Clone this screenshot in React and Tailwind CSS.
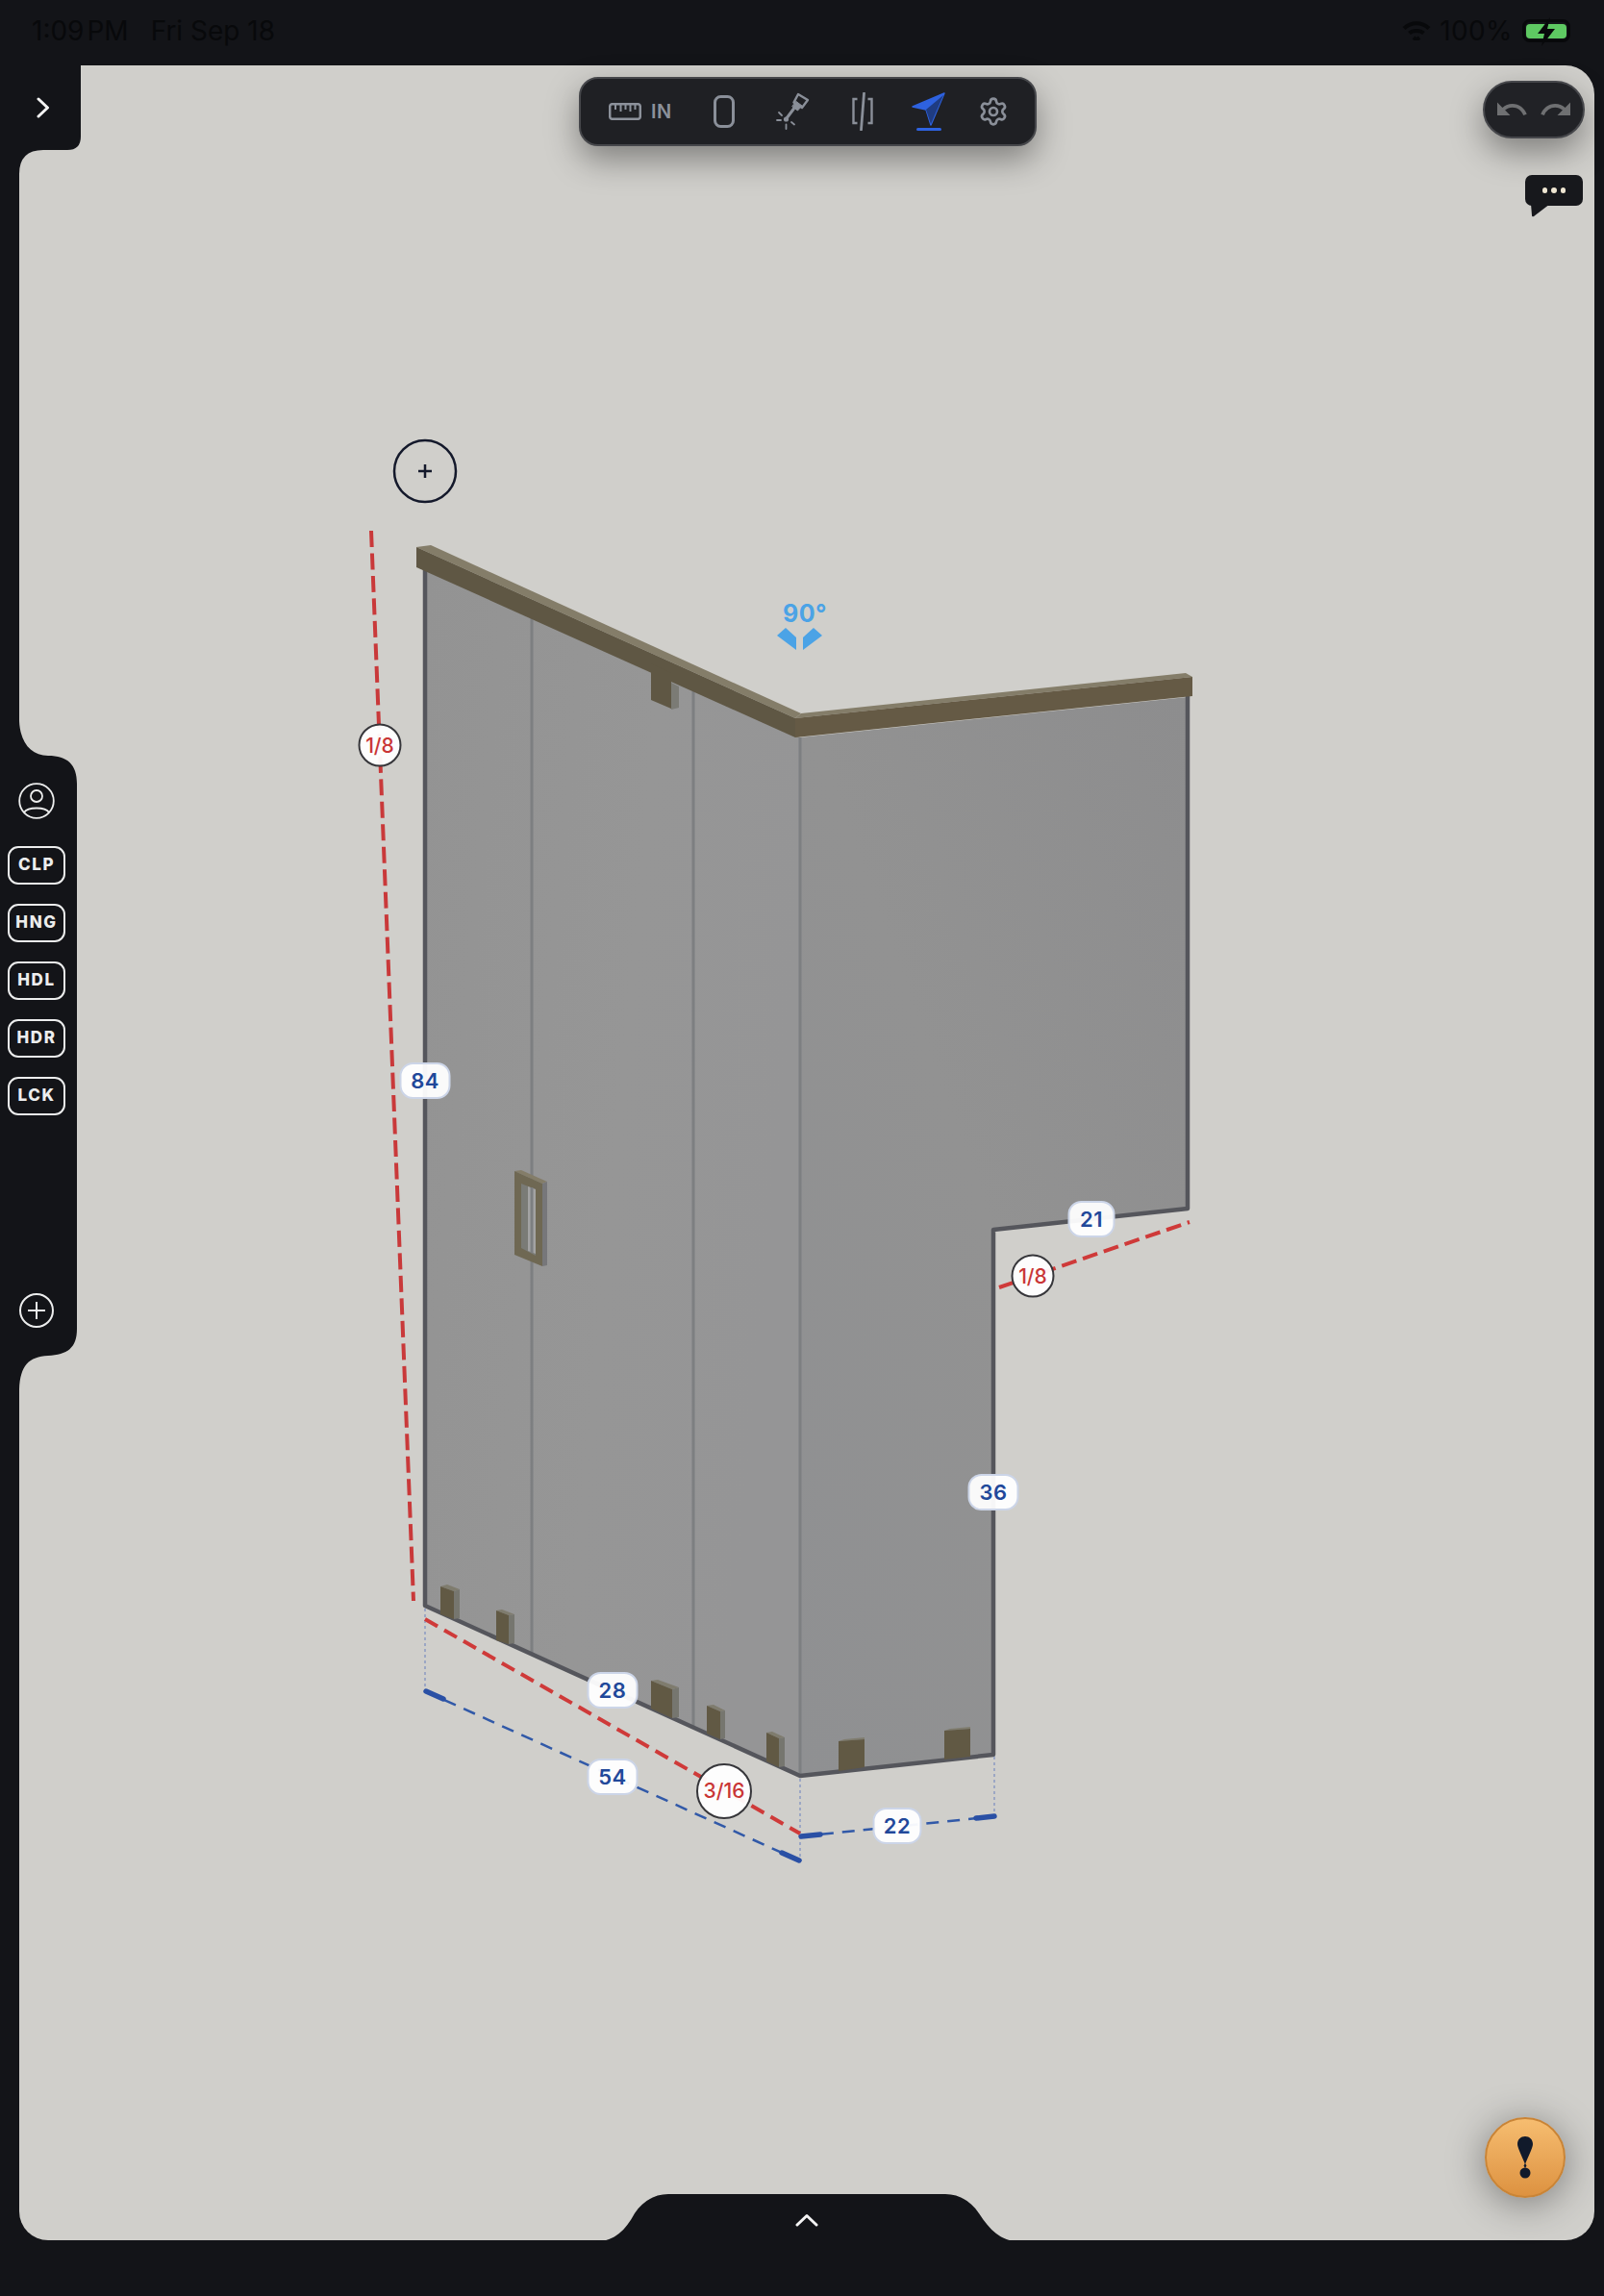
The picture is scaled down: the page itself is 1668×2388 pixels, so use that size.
import React from 'react';
import { Settings } from 'lucide-react';
import { MdUndo, MdRedo } from 'react-icons/md';

const FONT = "font-['Inter','Noto_Sans',sans-serif]";

// feet along the bottom of the two walls, [front, top, side] faces
const feet = [
  ['458,1650 472,1655 472,1684 458,1679', '458,1650 465,1648 478,1653 472,1655', '472,1655 478,1653 478,1683 472,1684'],
  ['516,1675 529,1680 529,1710 516,1706', '516,1675 522,1674 535,1679 529,1680', '529,1680 535,1679 535,1709 529,1710'],
  ['677,1748 699,1757 699,1787 677,1777', '677,1748 684,1747 706,1755 699,1757', '699,1757 706,1755 706,1786 699,1787'],
  ['735,1774 749,1780 749,1809 735,1803', '735,1774 742,1773 754,1779 749,1780', '749,1780 754,1779 754,1808 749,1809'],
  ['797,1802 810,1808 810,1838 797,1832', '797,1802 803,1801 816,1807 810,1808', '810,1808 816,1807 816,1837 810,1838'],
  ['872,1811 899,1809 899,1838 872,1842', '872,1811 878,1809 899,1807 899,1809', '899,1809 899,1809 899,1838 899,1838'],
  ['982,1800 1009,1798 1009,1827 982,1830', '982,1800 988,1798 1009,1796 1009,1798', '1009,1798 1009,1798 1009,1827 1009,1827'],
];

function Chip({ children }) {
  return (
    <div className="flex h-[40px] w-[60px] items-center justify-center rounded-[11px] border-2 border-[#eceded] text-[17px] font-extrabold tracking-[1.6px] text-[#eceded]">
      {children}
    </div>
  );
}

function Dim({ className, children }) {
  return (
    <div className={`absolute flex h-[38px] -translate-x-1/2 -translate-y-1/2 items-center justify-center rounded-[14px] border-2 border-[#ccd5e8] bg-white/95 text-[22px] font-semibold tracking-[0.5px] text-[#21489a] ${className}`}>
      {children}
    </div>
  );
}

function Gap({ className, children }) {
  return (
    <div className={`absolute flex -translate-x-1/2 -translate-y-1/2 items-center justify-center rounded-full border-2 border-[#36363a] bg-white/95 text-[21px] font-medium text-[#c93535] ${className}`}>
      {children}
    </div>
  );
}

function Drawing() {
  return (
    <svg className="absolute left-0 top-0" width="1668" height="2388" viewBox="0 0 1668 2388" fill="none">
      <defs>
        <linearGradient id="wallLeft" x1="0" y1="0" x2="1" y2="0.3">
          <stop offset="0" stopColor="#939393" />
          <stop offset="0.6" stopColor="#969696" />
          <stop offset="1" stopColor="#959596" />
        </linearGradient>
        <linearGradient id="wallRight" x1="0" y1="1" x2="1" y2="0">
          <stop offset="0" stopColor="#8f9092" />
          <stop offset="0.5" stopColor="#929292" />
          <stop offset="1" stopColor="#8d8d8e" />
        </linearGradient>
      </defs>

      {/* glass */}
      <polygon points="442,592 832,767 832,1847 442,1670" fill="url(#wallLeft)" />
      <polygon points="832,767 1235,725 1235,1257 1033,1279 1033,1825 832,1847" fill="url(#wallRight)" />

      {/* seams */}
      <path d="M553 643V1720M721 719V1797M832 767V1847" stroke="#7d7f81" strokeWidth="3" />
      <path d="M442 590V1670L832 1847L1033 1825V1279L1235 1257V722" stroke="#55565c" strokeWidth="4.5" strokeLinejoin="round" />

      {/* top rail */}
      <polygon points="433,569 448,567 833,742 827,747" fill="#847d69" />
      <polygon points="433,569 827,747 827,767 433,590" fill="#5f5744" />
      <polygon points="827,747 833,742 1233,700 1240,704" fill="#847d69" />
      <polygon points="827,747 1240,704 1240,724 827,767" fill="#655a45" />
      <polygon points="677,690 698,700 698,737 677,728" fill="#5f5744" />
      <polygon points="698,710 706,714 706,736 698,738" fill="#7b7b75" />

      {/* handle */}
      <polygon points="535,1218 542,1217 569,1229 564,1231" fill="#847d69" />
      <polygon points="564,1231 569,1229 569,1316 564,1317" fill="#77777a" />
      <polygon points="535,1218 564,1231 564,1317 535,1305" fill="#6f6853" />
      <polygon points="542,1231 557,1237 557,1306 542,1298" fill="#7a7b76" />
      <polygon points="549,1234 557,1237 557,1304 549,1301" fill="#a3a3a3" />
      <path d="M553 1235V1303" stroke="#7d7f81" strokeWidth="3" />

      {/* feet */}
      {feet.map(([front, top, side], i) => (
        <g key={i}>
          <polygon points={top} fill="#7f7c6e" />
          <polygon points={side} fill="#76766f" />
          <polygon points={front} fill="#615944" />
        </g>
      ))}

      {/* angle marker */}
      <polygon points="808,661 817,653 828,663 828,676" fill="#4ba3e6" />
      <polygon points="835,663 846,653 855,661 835,676" fill="#4ba3e6" />

      {/* add point */}
      <circle cx="442" cy="490" r="32" stroke="#14192b" strokeWidth="2.5" />
      <path d="M442 483V497M435 490H449" stroke="#14192b" strokeWidth="2.5" />

      {/* dotted guides */}
      <path d="M442 1673V1758M832 1850V1935M1034 1827V1888" stroke="#8a9bc2" strokeWidth="1.5" strokeDasharray="3 3" />

      {/* blue dimensions */}
      <path d="M442 1759L833 1936" stroke="#3159a8" strokeWidth="2.5" strokeDasharray="13 9" />
      <path d="M832 1910L1036 1889" stroke="#3159a8" strokeWidth="2.5" strokeDasharray="13 9" />
      <path d="M443 1759L461 1767M813 1927L831 1935M833 1910L853 1908M1015 1891L1034 1889" stroke="#2a50a5" strokeWidth="5.5" strokeLinecap="round" />

      {/* red dimensions */}
      <path d="M386 552L430 1665" stroke="#c9393a" strokeWidth="4" strokeDasharray="17 6.5" />
      <path d="M442 1684L832 1907" stroke="#cf3a39" strokeWidth="4" strokeDasharray="15 8" />
      <path d="M1039 1339L1237 1271" stroke="#cf3a39" strokeWidth="4" strokeDasharray="16 7" />
    </svg>
  );
}

function Tabs() {
  return (
    <svg className="absolute left-0 top-0" width="1668" height="2388" viewBox="0 0 1668 2388" fill="#131418">
      <path d="M0 60H84V142Q84 156 70 156H45Q20 156 20 181V200H0Z" />
      <path d="M0 750H20C21 772 32 786 50 786C70 786 80 795 80 815V1382C80 1402 70 1409 50 1410C30 1411 21 1420 20 1445H0Z" />
      <path d="M620 2332C640 2330 650 2320 660 2302C668 2290 680 2282 695 2282H983C998 2282 1010 2290 1018 2302C1030 2320 1040 2330 1060 2332Z" />
    </svg>
  );
}

function Toolbar() {
  return (
    <div className="absolute left-[602px] top-[80px] flex h-[72px] w-[476px] items-center rounded-[20px] border-2 border-[#46474b] bg-[#1f2024] pl-[29px] shadow-[0_14px_34px_rgba(0,0,0,0.38)]">
      <svg width="34" height="18" viewBox="0 0 34 18" fill="none" stroke="#8c919b" strokeWidth="2.5">
        <rect x="1.2" y="1.2" width="31.6" height="15.6" rx="2.5" />
        <path d="M7 1.5V7M12.5 1.5V9M17.5 1.5V7M22.5 1.5V9M27.5 1.5V7" strokeWidth="2" />
      </svg>
      <span className="ml-[10px] text-[20px] font-semibold tracking-[0.5px] text-[#8c919b]">IN</span>

      <svg className="ml-[43px]" width="22" height="34" viewBox="0 0 22 34" fill="none">
        <rect x="1.5" y="1.5" width="19" height="31" rx="6" stroke="#8a8f99" strokeWidth="3" />
      </svg>

      <svg className="ml-[43px]" width="36" height="40" viewBox="0 0 36 40" fill="none" stroke="#8a8f99" strokeLinecap="round">
        <path d="M23 2L33 8L27 16L18.5 10.5Z" strokeWidth="2.4" strokeLinejoin="round" />
        <path d="M21 9.5L27 14L22.5 19L17 15Z" fill="#8a8f99" strokeWidth="1" />
        <path d="M18.5 17L11 27" strokeWidth="3" />
        <circle cx="10.5" cy="28" r="2.6" fill="#8a8f99" stroke="none" />
        <path d="M1 29H5M3 21L6 24M10.5 33.5V38M16 31L19 33.5" strokeWidth="1.8" />
      </svg>

      <svg className="ml-[43px]" width="22" height="40" viewBox="0 0 22 40" fill="none" stroke="#8a8f99" strokeWidth="2.4">
        <path d="M5.5 7H1.5V32H5.5M16.5 7H20.5V32H16.5" />
        <path d="M12.5 1L9.5 39" strokeWidth="2.8" strokeLinecap="round" />
      </svg>

      <div className="ml-[40px] flex flex-col items-center">
        <svg width="36" height="36" viewBox="0 0 36 36">
          <polygon points="1,15 34,1 20,34 15,18" fill="#2e62e0" stroke="#2e62e0" strokeWidth="1.5" strokeLinejoin="round" />
          <polygon points="33,3 20,33 15,18" fill="#1f3c82" />
        </svg>
        <div className="mt-[1px] h-[3px] w-[26px] rounded-full bg-[#2e62e0]" />
      </div>

      <Settings className="ml-[33px]" size={32} color="#8a8f99" strokeWidth={2} />
    </div>
  );
}

export default function App() {
  return (
    <div className={`relative flex h-[2388px] w-[1668px] flex-col overflow-hidden bg-[#131418] ${FONT}`}>
      {/* status bar */}
      <div className="flex h-[68px] items-center justify-between pb-[4px] pl-[33px] pr-[35px] text-[28px] text-[#08090b]">
        <div className="flex items-center">
          <span>1:09</span>
          <span className="ml-[3px]">PM</span>
          <span className="ml-[23px]">Fri Sep 18</span>
        </div>
        <div className="flex items-center">
          <svg width="30" height="20" viewBox="0 0 30 20" fill="none" stroke="#08090b" strokeWidth="4">
            <path d="M2 7.5C9.5 0.5 20.5 0.5 28 7.5" />
            <path d="M7.5 12.5C11.5 9 18.5 9 22.5 12.5" />
            <path d="M12 17L15 19.5L18 17" fill="#08090b" />
          </svg>
          <span className="ml-[9px] tracking-[0.4px]">100%</span>
          <div className="relative ml-[10px] flex h-[24px] w-[50px] items-center justify-center rounded-[8px] border-[3px] border-[#08090b]">
            <div className="h-[15px] w-[42px] rounded-[4px] bg-[#5ec962]" />
            <svg className="absolute left-[11px] top-[-6px]" width="22" height="32" viewBox="0 0 22 32">
              <polygon points="15,1 2,18 9,18 6,31 20,13 12,13" fill="#08090b" />
            </svg>
          </div>
        </div>
      </div>

      {/* canvas */}
      <div className="ml-[20px] h-[2262px] w-[1638px] rounded-b-[30px] rounded-tr-[30px] bg-[#d0cfcb]" />

      <Drawing />
      <Tabs />

      {/* menu tab */}
      <button className="absolute left-[37px] top-[100px] flex h-[24px] w-[16px] items-center justify-center">
        <svg width="14" height="22" viewBox="0 0 14 22" fill="none">
          <path d="M2 2L11.5 11L2 20" stroke="#f4f4f4" strokeWidth="3" strokeLinecap="round" strokeLinejoin="round" />
        </svg>
      </button>

      {/* hardware rail */}
      <div className="absolute left-0 top-[814px] flex h-[568px] w-[76px] flex-col items-center">
        <svg width="38" height="38" viewBox="0 0 38 38" fill="none" stroke="#eceded" strokeWidth="1.8">
          <circle cx="19" cy="19" r="17.8" />
          <circle cx="19" cy="14" r="6" />
          <path d="M6 31C10 25 28 25 32 31" />
        </svg>
        <div className="mt-[28px] flex flex-col gap-[20px]">
          <Chip>CLP</Chip>
          <Chip>HNG</Chip>
          <Chip>HDL</Chip>
          <Chip>HDR</Chip>
          <Chip>LCK</Chip>
        </div>
        <svg className="mt-auto" width="38" height="38" viewBox="0 0 38 38" fill="none" stroke="#eceded" strokeWidth="2">
          <circle cx="19" cy="19" r="17" />
          <path d="M19 10V28M10 19H28" />
        </svg>
      </div>

      <Toolbar />

      {/* undo / redo */}
      <div className="absolute left-[1542px] top-[84px] flex h-[60px] w-[106px] items-center justify-center gap-[10px] rounded-full border-2 border-[#46474b] bg-[#212226] shadow-[0_14px_34px_rgba(0,0,0,0.38)]">
        <MdUndo size={36} color="#6f7072" />
        <MdRedo size={36} color="#6f7072" />
      </div>

      {/* comments */}
      <div className="absolute left-[1586px] top-[182px] flex h-[32px] w-[60px] items-center justify-center gap-[4px] rounded-[7px] bg-[#17181c]">
        <span className="h-[5.5px] w-[5.5px] rounded-full bg-[#efe6d2]" />
        <span className="h-[5.5px] w-[5.5px] rounded-full bg-[#efe6d2]" />
        <span className="h-[5.5px] w-[5.5px] rounded-full bg-[#efe6d2]" />
        <svg className="absolute left-[6px] top-[30px]" width="20" height="16" viewBox="0 0 20 16">
          <path d="M0 0H20L3 13Q1 14 1 12Z" fill="#17181c" />
        </svg>
      </div>

      {/* labels */}
      <div className="absolute left-[814px] top-[624px] text-[25px] font-bold leading-[28px] tracking-[0.5px] text-[#4ba3e6]">90°</div>
      <Dim className="left-[442px] top-[1124px] w-[53px]">84</Dim>
      <Dim className="left-[637px] top-[1758px] w-[53px]">28</Dim>
      <Dim className="left-[637px] top-[1848px] w-[53px]">54</Dim>
      <Dim className="left-[933px] top-[1899px] w-[51px]">22</Dim>
      <Dim className="left-[1135px] top-[1268px] w-[49px]">21</Dim>
      <Dim className="left-[1033px] top-[1552px] w-[53px]">36</Dim>
      <Gap className="left-[395px] top-[775px] h-[45px] w-[45px]">1/8</Gap>
      <Gap className="left-[1074px] top-[1327px] h-[45px] w-[45px]">1/8</Gap>
      <Gap className="left-[753px] top-[1863px] h-[58px] w-[58px]">3/16</Gap>

      {/* warning button */}
      <button className="absolute left-[1544px] top-[2202px] flex h-[84px] w-[84px] items-center justify-center rounded-full border-2 border-[#c98436] bg-gradient-to-b from-[#f6bd70] to-[#dd9240] shadow-[0_6px_40px_rgba(0,0,0,0.4)]">
        <svg width="18" height="46" viewBox="0 0 18 46">
          <path d="M1 9C1 4 4.5 1 9 1C13.5 1 17 4 17 9C17 13 12 22 9 30C6 22 1 13 1 9Z" fill="#111a2b" />
          <polygon points="9,29 10.5,31.5 9,34 7.5,31.5" fill="#111a2b" />
          <circle cx="9" cy="39" r="5.5" fill="#111a2b" />
        </svg>
      </button>

      {/* drawer handle */}
      <button className="absolute left-[827px] top-[2302px] flex h-[14px] w-[24px] items-center justify-center">
        <svg width="24" height="14" viewBox="0 0 24 14" fill="none">
          <path d="M2 12L12 2.5L22 12" stroke="#f4f4f4" strokeWidth="3" strokeLinecap="round" strokeLinejoin="round" />
        </svg>
      </button>
    </div>
  );
}
